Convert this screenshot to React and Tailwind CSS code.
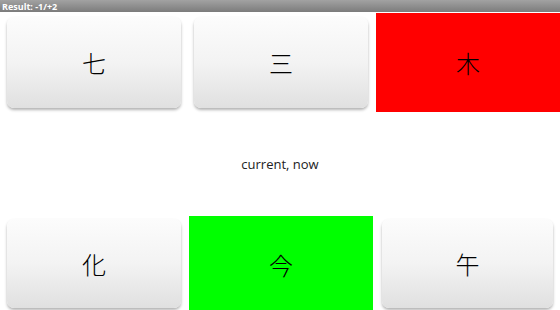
import React from "react";

const cjk = { fontFamily: '"Noto Sans CJK JP", "Noto Sans CJK SC", sans-serif' };

const Key = ({ ch, color, className }) => {
  if (color) {
    return (
      <div className={`flex items-center justify-center ${color} ${className}`}>
        <span className="text-[24px] font-light leading-none text-black" style={cjk}>
          {ch}
        </span>
      </div>
    );
  }
  return (
    <div
      className={`flex items-center justify-center rounded-[7px] bg-gradient-to-b from-[#fcfcfc] via-[#f3f3f3] to-[#e0e0e0] shadow-[0_2px_3px_rgba(0,0,0,0.3)] ${className}`}
    >
      <span className="text-[24px] font-light leading-none text-black" style={cjk}>
        {ch}
      </span>
    </div>
  );
};

export default function App() {
  return (
    <div className="w-[560px] h-[310px] overflow-hidden bg-white" style={{ fontFamily: '"Open Sans", sans-serif' }}>
      <div className="h-[12px] bg-gradient-to-b from-[#a2a2a2] to-[#7c7c7c] px-[2px] flex items-center">
        <span className="text-[9px] font-bold text-white leading-none">Result: -1/+2</span>
      </div>

      <div className="grid grid-cols-[187px_186px_187px] h-[101px]">
        <Key ch="七" className="ml-[7px] mr-[6px] mt-[5px] mb-[5px]" />
        <Key ch="三" className="ml-[7px] mr-[5px] mt-[5px] mb-[5px]" />
        <Key ch="木" color="bg-[#ff0000]" className="ml-[3px] mt-[1px] mb-[1px]" />
      </div>

      <div className="h-[100px] flex items-center justify-center pt-[4px]">
        <span className="text-[13px] text-[#222]">current, now</span>
      </div>

      <div className="grid grid-cols-[187px_186px_187px] h-[100px]">
        <Key ch="化" className="ml-[7px] mr-[6px] mt-[6px] mb-[5px]" />
        <Key ch="今" color="bg-[#00ff00]" className="ml-[2px] mr-0 mt-[3px]" />
        <Key ch="午" className="ml-[9px] mr-[7px] mt-[6px] mb-[5px]" />
      </div>
    </div>
  );
}
